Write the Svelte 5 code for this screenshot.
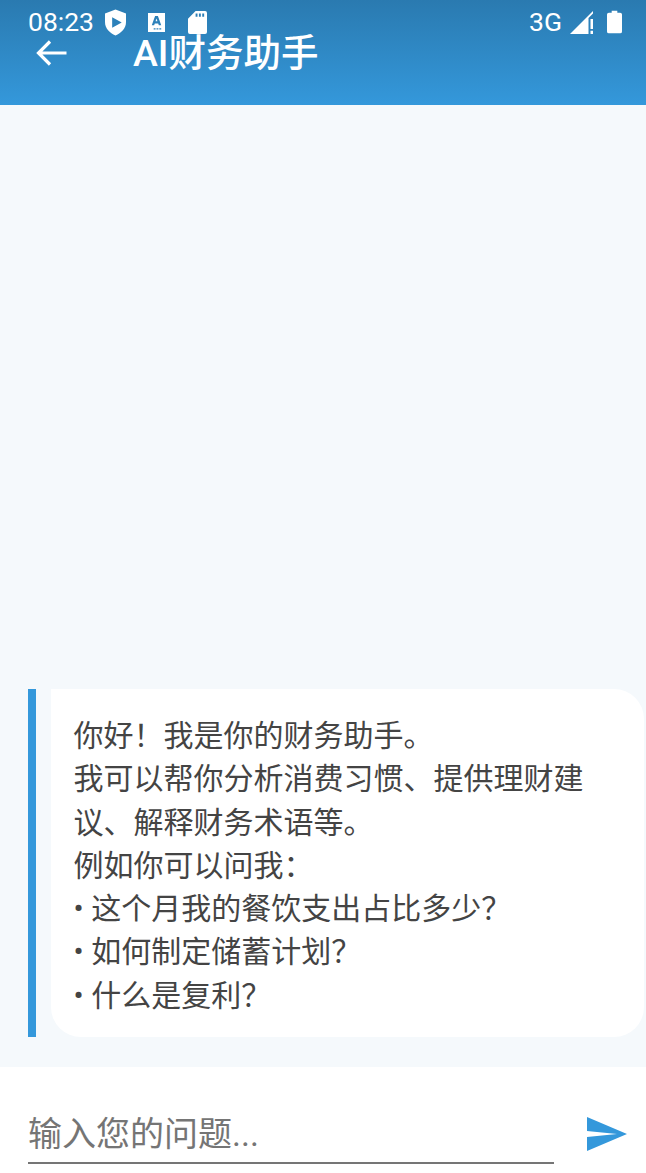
<script lang="ts">
  const lines = [
    '你好！我是你的财务助手。',
    '我可以帮你分析消费习惯、提供理财建议、解释财务术语等。',
    '例如你可以问我：',
    '• 这个月我的餐饮支出占比多少？',
    '• 如何制定储蓄计划？',
    '• 什么是复利？'
  ]
</script>

<div class="screen">
  <header class="appbar">
    <div class="status">
      <div class="status-left">
        <span class="time">08:23</span>
        <svg class="ic-shield" viewBox="0 0 22 27" width="21" height="27">
          <path fill="#fff" fill-rule="evenodd" d="M11 0 L22 4 V13 C22 20 17 24.500 11 27 C5 24.500 0 20 0 13 V4 Z M7.500 8 V19 L17.500 13.500 Z" />
        </svg>
        <svg class="ic-a" viewBox="0 0 18 20" width="17" height="19">
          <path fill="#fff" fill-rule="evenodd" d="M0 0 H18 V20 H0 Z M7.500 3 L4 13 H6.500 L7.200 11 H10.800 L11.500 13 H14 L10.500 3 Z M8 8.800 L9 5.800 L10 8.800 Z M6 16 V17.500 H8 V16 Z M9 16 V17.500 H11 V16 Z M12 16 V17.500 H14 V16 Z" />
        </svg>
        <svg class="ic-sd" viewBox="0 0 20 24" width="19" height="23">
          <path fill="#fff" fill-rule="evenodd" d="M8 0 H18 Q20 0 20 2 V22 Q20 24 18 24 H2 Q0 24 0 22 V8 Z M8 2.500 V6 H10 V2.500 Z M11.500 2.500 V6 H13.500 V2.500 Z M15 2.500 V6 H17 V2.500 Z" />
        </svg>
      </div>
      <div class="status-right">
        <span class="net">3G</span>
        <svg class="ic-signal" viewBox="0 0 24 23" width="24" height="23">
          <path fill="#fff" d="M0 23 L23 0 V2.500 L18.500 7 V23 Z" />
          <path fill="#fff" d="M20.500 8 H23 V18 H20.500 Z M20.500 19.800 H23 V23 H20.500 Z" />
        </svg>
        <svg class="ic-batt" viewBox="0 0 16 24" width="15" height="24">
          <path fill="#fff" d="M5 0 H11 V2 H14 Q16 2 16 4 V22 Q16 24 14 24 H2 Q0 24 0 22 V4 Q0 2 2 2 H5 Z" />
        </svg>
      </div>
    </div>
    <div class="toolbar">
      <svg class="back" viewBox="0 0 34 28" width="34" height="28">
        <path d="M32.500 14 H5 M16 2.500 L4.500 14 L16 25.500" fill="none" stroke="#fff" stroke-width="3.200" />
      </svg>
      <span class="title">AI财务助手</span>
    </div>
  </header>

  <main class="chat">
    <div class="message">
      <div class="bubble">
        {#each lines as line}
          <p>{line}</p>
        {/each}
      </div>
    </div>
  </main>

  <footer class="composer">
    <div class="field">输入您的问题...</div>
    <svg class="send" viewBox="0 0 40 34" width="40" height="34">
      <path fill="#3498db" d="M0 0 L40 17 L0 34 V20 L30 17 L0 14 Z" />
    </svg>
  </footer>
</div>

<style>
  :global(body) {
    margin: 0;
  }

  .screen {
    width: 646px;
    height: 1173px;
    display: flex;
    flex-direction: column;
    background: #f5f9fc;
    font-family: Roboto, "Noto Sans CJK SC", sans-serif;
    overflow: hidden;
  }

  .appbar {
    height: 105px;
    flex-shrink: 0;
    background: linear-gradient(#2a7ab0, #3498db);
    color: #fff;
  }

  .status {
    height: 36px;
    padding: 4px 24px 0 28px;
    display: flex;
    justify-content: space-between;
    align-items: center;
    margin-bottom: -5px;
  }

  .status-left,
  .status-right {
    display: flex;
    align-items: center;
  }

  .time,
  .net {
    font-size: 26.500px;
    line-height: 36px;
  }

  .ic-shield {
    margin-left: 11px;
  }

  .ic-a {
    margin-left: 22px;
  }

  .ic-sd {
    margin-left: 23px;
  }

  .ic-signal {
    margin-left: 8px;
  }

  .ic-batt {
    margin-left: 13px;
  }

  .toolbar {
    display: flex;
    align-items: center;
    height: 36px;
  }

  .back {
    margin-left: 34px;
  }

  .title {
    margin-left: 65px;
    font-size: 37.500px;
    font-weight: 500;
    line-height: 36px;
    white-space: nowrap;
  }

  .chat {
    flex: 1;
    display: flex;
    flex-direction: column;
    justify-content: flex-end;
    padding-bottom: 30px;
  }

  .message {
    margin-left: 28px;
    margin-right: 2px;
    padding-left: 14.600px;
    border-left: 8px solid #3498db;
  }

  .bubble {
    background: #fff;
    border-radius: 0 30px 30px 30px;
    padding: 25px 23px 20px;
    color: #444;
    font-size: 30px;
    line-height: 43.300px;
  }

  p {
    margin: 0;
  }

  .composer {
    height: 106px;
    flex-shrink: 0;
    background: #fff;
    display: flex;
    align-items: flex-start;
    padding: 0 19px 0 28px;
  }

  .field {
    width: 526px;
    height: 59px;
    margin-top: 36px;
    border-bottom: 2px solid #757575;
    color: #757575;
    font-size: 34px;
    line-height: 62px;
  }

  .send {
    margin-top: 50px;
    margin-left: 33px;
  }
</style>
